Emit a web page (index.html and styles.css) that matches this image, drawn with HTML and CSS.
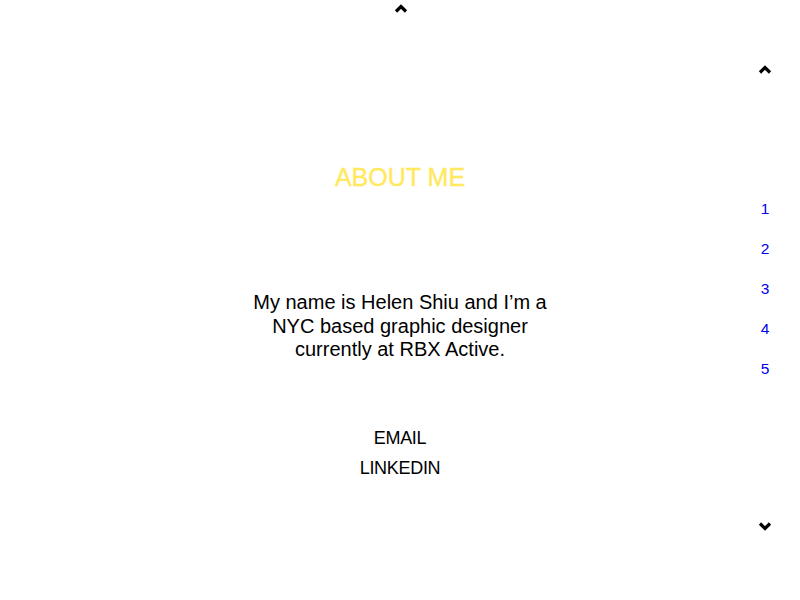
FILE: index.html
```html
<!DOCTYPE html>
<html>
<head>
<meta charset="utf-8">
<link rel="stylesheet" href="styles.css">
</head>
<body>
<a class="top-arrow" href="#"><svg width="14" height="9" viewBox="0 0 14 9"><path d="M2 7.5 L7 2.5 L12 7.5" fill="none" stroke="#000" stroke-width="3.2"/></svg></a>
<main class="about">
  <h1 class="title">ABOUT ME</h1>
  <p class="bio">My name is Helen Shiu and I’m a NYC based graphic designer currently at RBX Active.</p>
  <ul class="links">
    <li>EMAIL</li>
    <li>LINKEDIN</li>
  </ul>
</main>
<nav class="side-nav">
  <a class="arrow up" href="#"><svg width="14" height="9" viewBox="0 0 14 9"><path d="M2 7.5 L7 2.5 L12 7.5" fill="none" stroke="#000" stroke-width="3.2"/></svg></a>
  <ul class="pages">
    <li><a href="#">1</a></li>
    <li><a href="#">2</a></li>
    <li><a href="#">3</a></li>
    <li><a href="#">4</a></li>
    <li><a href="#">5</a></li>
  </ul>
  <a class="arrow down" href="#"><svg width="14" height="9" viewBox="0 0 14 9"><path d="M2 1.5 L7 6.5 L12 1.5" fill="none" stroke="#000" stroke-width="3.2"/></svg></a>
</nav>
</body>
</html>
```
FILE: styles.css
```css
html, body {
  margin: 0;
  padding: 0;
  background: #fff;
  font-family: "Liberation Sans", Arial, sans-serif;
  color: #000;
}
.top-arrow {
  position: absolute;
  left: 394px;
  top: 4px;
  display: block;
  line-height: 0;
}
.about {
  display: flex;
  flex-direction: column;
  align-items: center;
  padding-top: 162px;
}
.title {
  margin: 0;
  font-size: 25px;
  line-height: 30px;
  font-weight: normal;
  color: #ffe95e;
  -webkit-text-stroke: 0.4px #ffe95e;
}
.bio {
  margin: 99px 0 0;
  width: 320px;
  text-align: center;
  font-size: 20px;
  line-height: 23.5px;
}
.links {
  list-style: none;
  margin: 61px 0 0;
  padding: 0;
  text-align: center;
  font-size: 18px;
  line-height: 30px;
  letter-spacing: -0.3px;
}
.side-nav {
  position: absolute;
  left: 745px;
  top: 0;
  width: 40px;
  display: flex;
  flex-direction: column;
  align-items: center;
}
.arrow { display: block; line-height: 0; }
.arrow.up { margin-top: 65px; }
.pages {
  list-style: none;
  margin: 125px 0 0;
  padding: 0;
  display: flex;
  flex-direction: column;
  gap: 20px;
  align-items: center;
}
.pages li { line-height: 20px; font-size: 15.5px; }
.pages a { color: #0000ee; text-decoration: none; }
.arrow.down { margin-top: 143px; }
```
